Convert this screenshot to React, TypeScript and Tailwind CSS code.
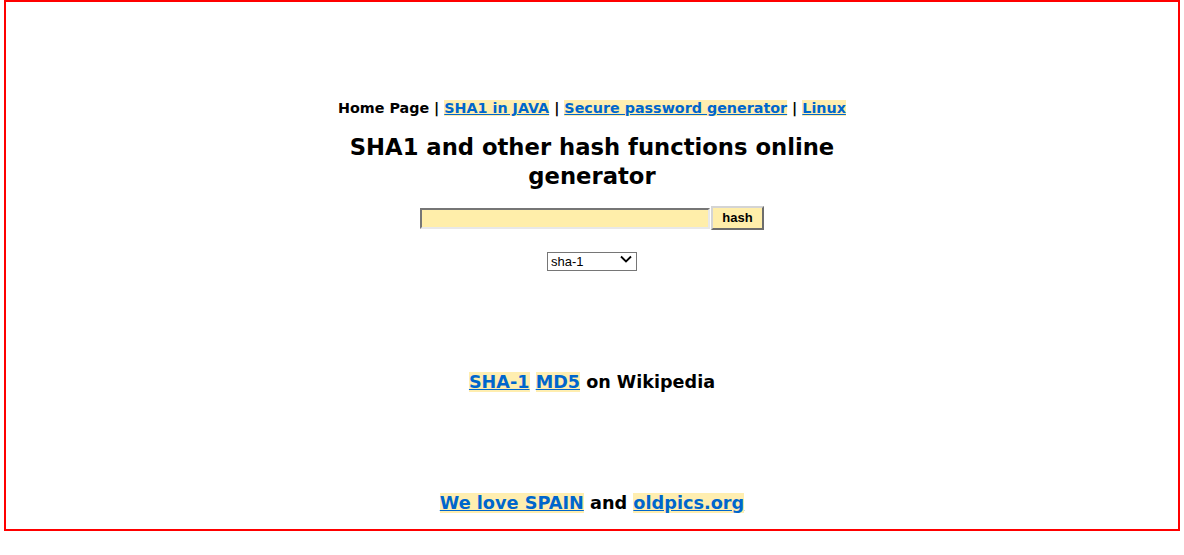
import React from 'react';

const linkCls = 'text-[#0066cc] underline bg-[#ffeeb0]';

const App: React.FC = () => {
  return (
    <div className="bg-white h-[555px]" style={{ fontFamily: '"DejaVu Sans", Verdana, sans-serif' }}>
      <div className="mx-[4px] h-[531px] border-2 border-[#ff0000] text-center text-black">
        <div className="pt-[96px] text-[14.3px] leading-[20px] font-bold">
          Home Page | <a href="#" className={linkCls}>SHA1 in JAVA</a> |{' '}
          <a href="#" className={linkCls}>Secure password generator</a> |{' '}
          <a href="#" className={linkCls}>Linux</a>
        </div>
        <h1 className="mt-[15px] mx-auto w-[500px] text-[22.7px] leading-[29px] font-bold">
          SHA1 and other hash functions online generator
        </h1>
        <div className="mt-[15px] flex justify-center items-center">
          <input
            type="text"
            className="w-[290px] h-[21px] bg-[#ffeeaa] border-2 border-t-[#767676] border-l-[#767676] border-b-[#e8e8e8] border-r-[#e8e8e8] outline-none"
          />
          <button
            className="ml-[1px] w-[53px] h-[24px] bg-[#ffeeaa] border-2 border-t-[#d4d4d4] border-l-[#d4d4d4] border-b-[#6d6d6d] border-r-[#6d6d6d] text-[13px] font-bold"
            style={{ fontFamily: '"Liberation Sans", Arial, sans-serif' }}
          >
            hash
          </button>
        </div>
        <div className="mt-[19px] flex justify-center">
          <div className="relative w-[90px] h-[19px]">
            <select
              className="appearance-none w-full h-full border border-[#767676] bg-white pl-[3px] text-left text-[13px] leading-[17px]"
              style={{ fontFamily: '"Liberation Sans", Arial, sans-serif' }}
              defaultValue="sha-1"
            >
              <option>sha-1</option>
              <option>md5</option>
              <option>sha-256</option>
            </select>
            <svg className="absolute right-[5px] top-[6px] pointer-events-none" width="12" height="8" viewBox="0 0 12 8">
              <path d="M1 1.5 L6 6.5 L11 1.5" fill="none" stroke="#000" strokeWidth="1.8" />
            </svg>
          </div>
        </div>
        <div className="mt-[102px] text-[17.6px] leading-[24px] font-bold">
          <a href="#" className={linkCls}>SHA-1</a> <a href="#" className={linkCls}>MD5</a> on Wikipedia
        </div>
        <div className="mt-[97px] text-[17.7px] leading-[24px] font-bold">
          <a href="#" className={linkCls}>We love SPAIN</a> and <a href="#" className={linkCls}>oldpics.org</a>
        </div>
      </div>
    </div>
  );
};

export default App;
